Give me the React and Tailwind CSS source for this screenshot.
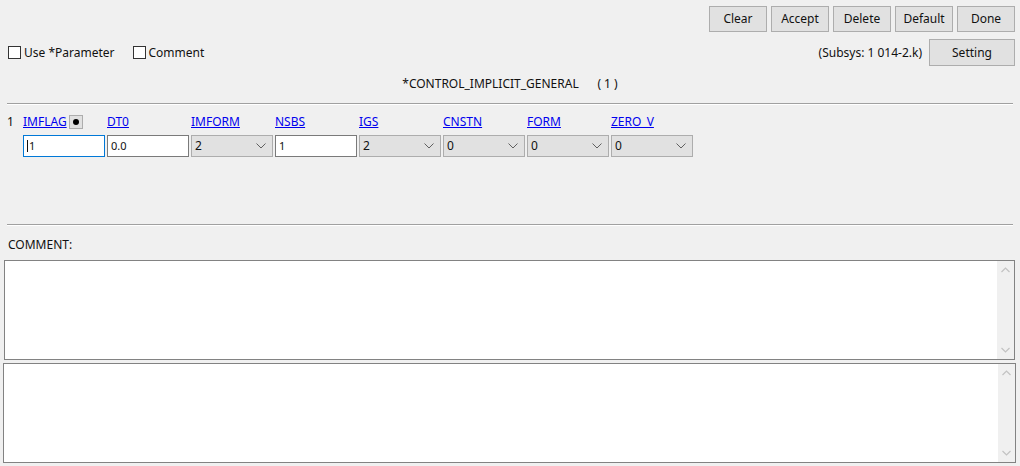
import React from "react";

const font = { fontFamily: '"Segoe UI", "Noto Sans", "Open Sans", sans-serif' };

function Btn({ children, className = "" }) {
  return (
    <div
      className={`flex items-center justify-center bg-[#e1e1e1] border border-[#adadad] text-[12px] text-[#111] ${className}`}
    >
      {children}
    </div>
  );
}

function Check({ label }) {
  return (
    <div className="flex items-center gap-[3px] text-[12px] text-[#111]">
      <div className="w-[13px] h-[13px] bg-white border border-[#333]" />
      <span>{label}</span>
    </div>
  );
}

function Chevron() {
  return (
    <svg width="10" height="6" viewBox="0 0 10 6" className="ml-auto mr-[6px]">
      <path d="M0.5 0.5 L5 5 L9.5 0.5" fill="none" stroke="#606060" strokeWidth="1" />
    </svg>
  );
}

function Field({ label, value, type, dot }) {
  return (
    <div className="flex flex-col w-[82px]">
      <div className="flex items-center h-[15px] mb-[6px]">
        <span className="text-[12px] text-[#0000ee] underline leading-[15px]">{label}</span>
        {dot && (
          <div className="ml-[2px] w-[14px] h-[14px] bg-[#e1e1e1] border border-[#adadad] flex items-center justify-center">
            <div className="w-[6px] h-[6px] rounded-full bg-black" />
          </div>
        )}
      </div>
      {type === "select" ? (
        <div className="h-[22px] bg-[#e1e1e1] border border-[#adadad] flex items-center pl-[3px] text-[12px] text-[#111]">
          <span>{value}</span>
          <Chevron />
        </div>
      ) : type === "focus" ? (
        <div className="h-[22px] bg-white border border-[#0078d7] flex items-center pl-[3px] text-[11px] text-[#111]">
          <span className="border-l border-[#111] pl-[1px] leading-[12px]">{value}</span>
        </div>
      ) : (
        <div className="h-[22px] bg-white border border-[#7a7a7a] flex items-center pl-[3px] text-[11px] text-[#111]">
          <span>{value}</span>
        </div>
      )}
    </div>
  );
}

function ChevUp() {
  return (
    <svg width="9" height="6" viewBox="0 0 9 6">
      <path d="M0.5 5 L4.5 1 L8.5 5" fill="none" stroke="#c2c2c2" strokeWidth="1.2" />
    </svg>
  );
}
function ChevDown() {
  return (
    <svg width="9" height="6" viewBox="0 0 9 6">
      <path d="M0.5 1 L4.5 5 L8.5 1" fill="none" stroke="#c2c2c2" strokeWidth="1.2" />
    </svg>
  );
}

function TextBox({ className = "" }) {
  return (
    <div className={`flex bg-white border border-[#828282] ${className}`}>
      <div className="flex-1" />
      <div className="w-[17px] bg-[#f0f0f0] flex flex-col items-center justify-between py-[6px]">
        <ChevUp />
        <ChevDown />
      </div>
    </div>
  );
}

export default function App() {
  const fields = [
    { label: "IMFLAG", value: "1", type: "focus", dot: true },
    { label: "DT0", value: "0.0", type: "input" },
    { label: "IMFORM", value: "2", type: "select" },
    { label: "NSBS", value: "1", type: "input" },
    { label: "IGS", value: "2", type: "select" },
    { label: "CNSTN", value: "0", type: "select" },
    { label: "FORM", value: "0", type: "select" },
    { label: "ZERO_V", value: "0", type: "select" },
  ];
  return (
    <div className="w-[1020px] h-[466px] bg-[#f0f0f0] overflow-hidden flex flex-col" style={font}>
      {/* top buttons */}
      <div className="flex justify-end gap-[4px] pr-[5px] pt-[6px]">
        {["Clear", "Accept", "Delete", "Default", "Done"].map((b) => (
          <Btn key={b} className="w-[58px] h-[26px]">
            {b}
          </Btn>
        ))}
      </div>
      {/* second row */}
      <div className="flex items-center pl-[8px] pr-[5px] mt-[7px] h-[27px]">
        <div className="flex items-center gap-[18px]">
          <Check label="Use *Parameter" />
          <Check label="Comment" />
        </div>
        <div className="ml-auto flex items-center gap-[7px]">
          <span className="text-[12px] text-[#111]">(Subsys: 1 014-2.k)</span>
          <Btn className="w-[86px] h-[27px]">Setting</Btn>
        </div>
      </div>
      {/* title */}
      <div className="flex justify-center mt-[10px] h-[16px] text-[12px] text-[#111] leading-[16px]">
        <span className="whitespace-pre">*CONTROL_IMPLICIT_GENERAL      ( 1 )</span>
      </div>
      {/* line */}
      <div className="mx-[7px] mt-[11px] border-t border-[#a0a0a0] border-b border-b-white" />
      {/* fields */}
      <div className="flex mt-[9px] pl-[7px]">
        <div className="w-[16px] text-[12px] text-[#111] leading-[15px] h-[15px]">1</div>
        <div className="flex gap-[2px]">
          {fields.map((f) => (
            <Field key={f.label} {...f} />
          ))}
        </div>
      </div>
      {/* line 2 */}
      <div className="mx-[7px] mt-[67px] border-t border-[#a0a0a0] border-b border-b-white" />
      <div className="pl-[8px] mt-[11px] text-[12px] text-[#111] leading-[16px]">COMMENT:</div>
      <TextBox className="ml-[4px] mr-[5px] mt-[7px] h-[100px]" />
      <TextBox className="ml-[3px] mr-[4px] mt-[3px] h-[100px]" />
    </div>
  );
}
